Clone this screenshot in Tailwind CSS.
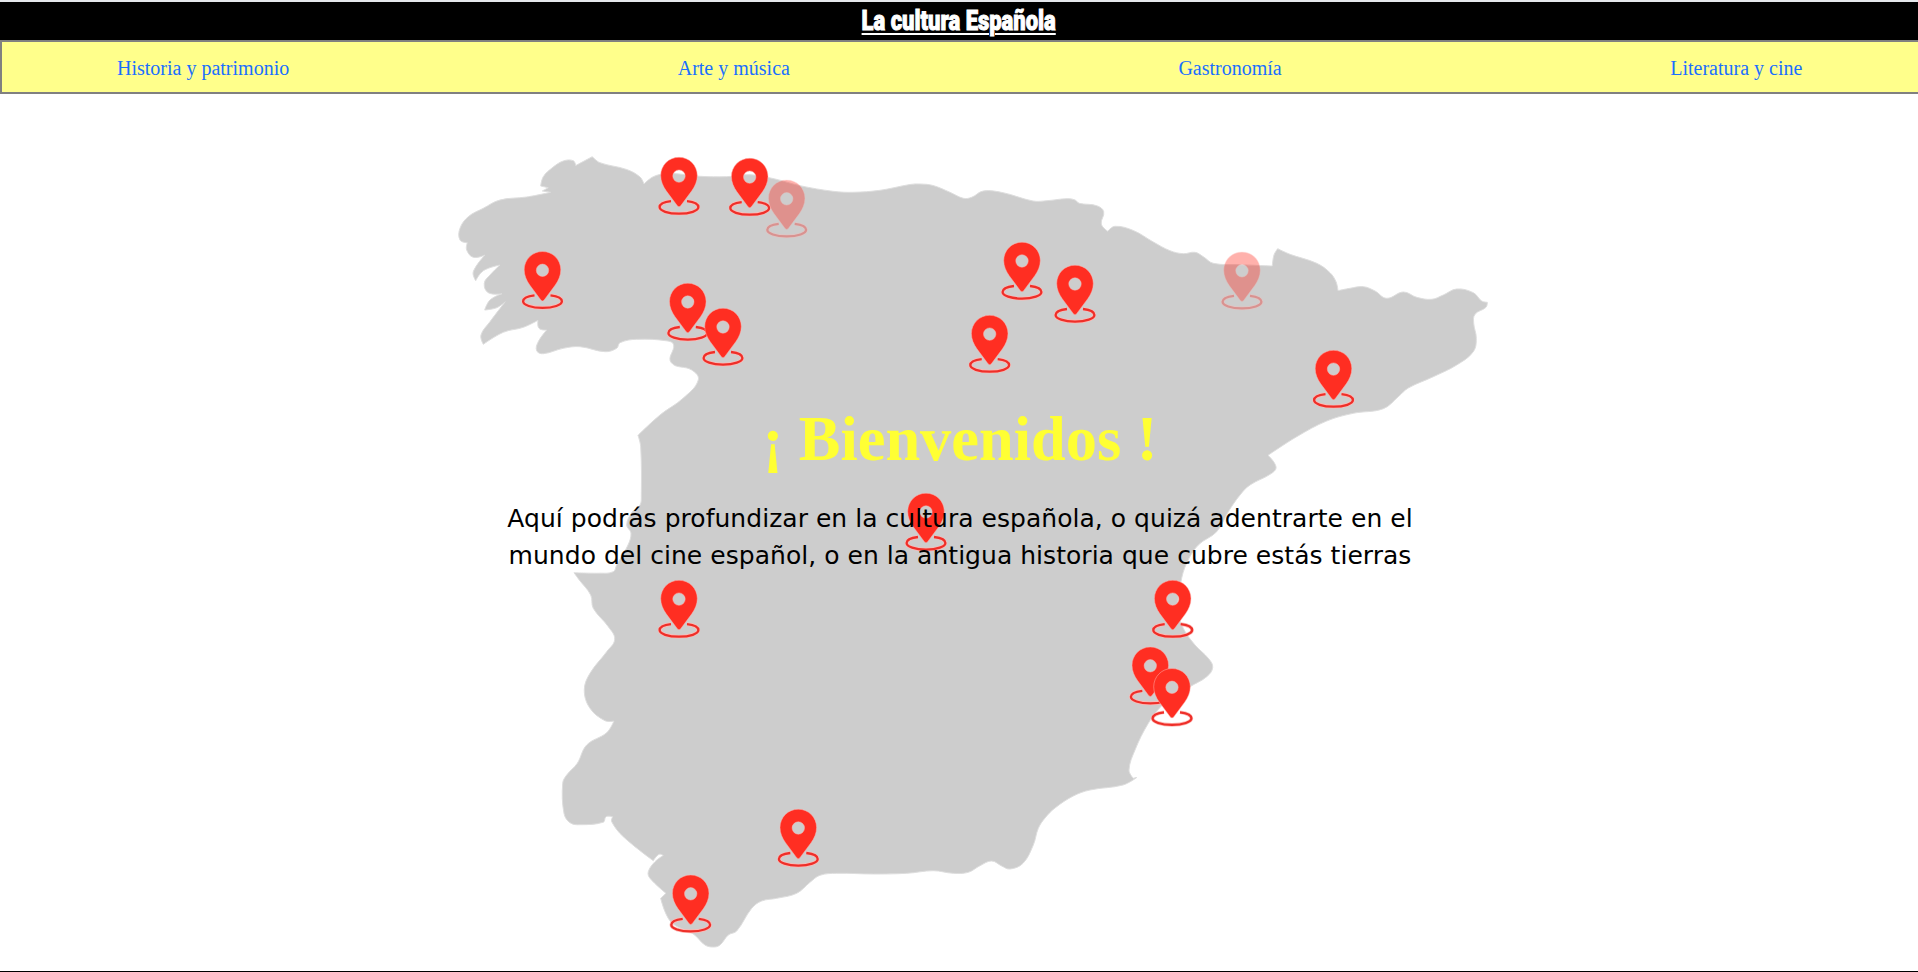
<!DOCTYPE html>
<html lang="es">
<head>
<meta charset="utf-8">
<title>La cultura Española</title>
<script src="https://cdn.jsdelivr.net/npm/@tailwindcss/browser@4"></script>
</head>
<body class="flex h-screen flex-col overflow-hidden bg-white">
  <header class="flex h-10 shrink-0 items-center justify-center border-t-2 border-gray-200 bg-black">
    <h1 class="text-white"><span class="inline-block origin-center scale-x-[0.785] whitespace-nowrap font-['Impact','Roboto',sans-serif] text-[28px] leading-[36px] font-black underline decoration-2 underline-offset-[3px] [-webkit-text-stroke:1px_white]">La cultura Española</span></h1>
  </header>
  <nav class="flex h-[54px] shrink-0 items-center gap-[388.5px] border-y-2 border-l-2 border-[#808080] bg-[#ffff8b] pt-0.5 pl-[115px] font-['Liberation_Serif',serif] text-[20px] whitespace-nowrap text-[#1a6fff]">
    <a>Historia y patrimonio</a>
    <a>Arte y música</a>
    <a>Gastronomía</a>
    <a>Literatura y cine</a>
  </nav>
  <main class="relative flex grow flex-col items-center border-b border-black">
    <svg class="absolute inset-0 h-full w-full" viewBox="0 94 1918 877" preserveAspectRatio="none">
      <defs>
        <g id="pin">
          <g fill="none">
            <path d="M-8 43.8C-15 44.6-19.4 47-19.4 49.8C-19.4 53.5-11 56.4 0 56.4S19.4 53.5 19.4 49.8C19.4 47 15 44.6 8 43.8" stroke="#ffb8b4" stroke-width="3.6"/>
            <path d="M-8 43.8C-15 44.6-19.4 47-19.4 49.8C-19.4 53.5-11 56.4 0 56.4S19.4 53.5 19.4 49.8C19.4 47 15 44.6 8 43.8" stroke="#ee2f29" stroke-width="2.3"/>
          </g>
          <path fill-rule="evenodd" fill="#ff2e22" stroke="#ffb5b0" stroke-width=".5" d="M0 0C10.2 0 18.3 8.1 18.3 18.3C18.3 24 16 29 12.8 33.5L1.5 48.7Q0 50.2-1.5 48.7L-12.8 33.5C-16 29-18.3 24-18.3 18.3C-18.3 8.1-10.2 0 0 0ZM0 12.6A6.2 6.2 0 1 0 0 25A6.2 6.2 0 1 0 0 12.6Z"/>
        </g>
      </defs>
      <path id="spain" fill="#cdcdcd" stroke="#dedede" stroke-width="1"/>
      <use href="#pin" x="679" y="157.3"/>
      <use href="#pin" x="749.7" y="158.3"/>
      <use href="#pin" x="786.7" y="180" opacity=".37"/>
      <use href="#pin" x="542.5" y="251.5"/>
      <use href="#pin" x="687.8" y="283.2"/>
      <use href="#pin" x="723" y="308.2"/>
      <use href="#pin" x="1022" y="242.2"/>
      <use href="#pin" x="1075" y="265.2"/>
      <use href="#pin" x="989.7" y="315.3"/>
      <use href="#pin" x="1242" y="252" opacity=".37"/>
      <use href="#pin" x="1333.5" y="350.3"/>
      <use href="#pin" x="926" y="493.2"/>
      <use href="#pin" x="679" y="580.3"/>
      <use href="#pin" x="1172.7" y="580.3"/>
      <use href="#pin" x="1150.3" y="647"/>
      <use href="#pin" x="1172" y="668.5"/>
      <use href="#pin" x="798.3" y="809.2"/>
      <use href="#pin" x="690.7" y="875"/>
    </svg>
    <h2 class="relative mt-[308px] pl-[2px] font-['Liberation_Serif',serif] text-[62.4px] leading-[74px] font-bold whitespace-nowrap text-[#ffff33]">¡ Bienvenidos !</h2>
    <p class="relative mt-[24px] pl-[2px] text-center font-['DejaVu_Sans',sans-serif] text-[25px] leading-[37px] tracking-[0.035px] whitespace-nowrap text-black">Aquí podrás profundizar en la cultura española, o quizá adentrarte en el<br>mundo del cine español, o en la antigua historia que cubre estás tierras</p>
  </main>
  <script>
    // Outline of the map; "*" marks a sharp corner, all other points are smoothed.
    const outline = `550.7,192.3* 542.3,191* 548.3,187.7* 540.7,186* 543.3,176.7 552,168 563.3,161 573.3,160.7 575.7,165.5* 592.3,156.7* 600,162.7 626.7,169.5 640,177 644,184* 653.3,176.7 666.7,173.5 679,174 700,176.3 726.7,176.7 750,174.7 775,179 800,185.7 833,191.3 853,192.3 880,190.3 910,184.5 920,184 933,185.5 950,192.3 963.3,198.3 971.7,197.3 983.3,191 1003,192.7 1033,201 1047,200.7 1067,198.7 1075,200 1079.3,203.3 1096.7,205.7 1103.7,211.7 1101.3,224 1107.7,231.3* 1115,226.3 1133.3,230.5 1153.3,242 1170,250.7 1183.3,253.7 1195,252.3 1203.3,256.7 1213.3,263.3 1240,264.7 1272.3,266* 1274,255 1277.7,248.7* 1290,254.3 1316.7,263.3 1330,272.7 1336,281.7 1338,290.7* 1350,288.3 1363.3,286.7 1375,291 1386.7,298.3 1403.3,292 1416.7,297.3 1431.7,299.3 1443.3,295 1456.7,289 1473.3,292.7 1481.7,301 1487.3,302.3* 1486,307.3 1475,314.3 1473.7,323.3 1476.3,338.3 1473.3,351.7 1456.7,365 1433.3,376.7 1408.3,388 1398.3,396.7 1383.3,408.7 1353.3,413.3 1326.7,421 1296.7,436.7 1268,455.3* 1276,466.7 1271.7,473.3 1250,485 1240,495 1228.3,511.7 1216.7,531.7 1198.3,545 1186.7,563 1180.7,583 1178,610 1183.3,628.3 1195,645 1208.3,658.3 1212.7,667.3 1206.7,676.7 1190,686.7 1173,698 1161.7,705.7 1148.3,723.3 1135,750 1129,770 1133.3,778.3* 1136.7,777.5* 1123,785 1090,790 1073.3,796 1055,808 1045,818 1038.3,828.3 1033.3,845 1023,863.3 1010,869 1001.7,866 991.7,861 980,865.7 968.3,872.3 953.3,873.3 933.3,870.7 906.7,873.3 873.3,874 836.7,873.3 820,875.3 810,882.3 796.7,893.3 776.7,898.3 761.7,901 751.7,908.3 736.7,931 728.3,935 720,945 713.3,947 705,945 693.3,934 671,922 660.7,898.3* 666,893.3* 650,878.3 648.3,871.7 655,861.7 663.3,855.5* 659,854.3 653.3,860.7* 623.3,836.7 611.7,821.7 612.7,816.7* 606,816.7 603.3,822.2 580,824.7 570,822.7 564,813.3 562.7,783.3 566.7,775 577.3,763.3 586.7,745 606.7,732.7 614,721* 605,720.7 590,708.3 584.3,690 590,673.3 606.7,651.7 614.7,639.3 608.3,626.7 593.3,608.3 590.7,595 579.3,580 574,572.7* 600,573.2 613.3,571.7 616.7,565 628,545 631,533 626.7,525 631.7,512.7 640,505 641.3,496.7 640.7,446.7 638,435.3* 660,415 683,398.3 698.3,380 691.7,370 671,362.3 673.7,345 668,341 636.7,339.3 620,342.7 616.7,348.3 605,351.7 580,346.7 563.3,348.3 543.3,353.7 536.7,350.7 538.3,341.7 546.7,330* 539,328.3 538,320.3* 523.3,327.3 503.3,332.3 483.3,344.3* 481,335 490,321.7 505.3,301.7* 496.7,307.7 484.7,310* 490,300 502,293.7* 488.3,292.7 484.3,283.3 490,275 500,265* 483.3,270.7 475.7,280.7* 473.3,271.7 485,255* 473.3,257.3 466.7,250 467.3,242.7* 460,240 460,228.3 468.3,216.7 483.3,208.3 500,200 526.7,197 550.7,192.3*`
      .split(/\s+/).map(t => { const [x, y] = t.replace('*', '').split(',').map(Number); return { x, y, c: t.endsWith('*') }; });
    let d = `M${outline[0].x} ${outline[0].y}`;
    for (let i = 0; i < outline.length - 1; i++) {
      const a = outline[i], b = outline[i + 1];
      const p = a.c ? a : outline[i - 1], n = b.c ? b : outline[i + 2];
      const len = Math.hypot(b.x - a.x, b.y - a.y);
      // Tangents follow the neighbouring points, with handles a third of the segment long.
      const ta = Math.hypot(b.x - p.x, b.y - p.y), tb = Math.hypot(n.x - a.x, n.y - a.y);
      const ka = a.c ? 0 : len / ta / 2.7;
      const kb = b.c ? 0 : len / tb / 2.7;
      d += `C${a.x + (b.x - p.x) * ka} ${a.y + (b.y - p.y) * ka} ${b.x - (n.x - a.x) * kb} ${b.y - (n.y - a.y) * kb} ${b.x} ${b.y}`;
    }
    document.getElementById('spain').setAttribute('d', d + 'Z');
  </script>
</body>
</html>
